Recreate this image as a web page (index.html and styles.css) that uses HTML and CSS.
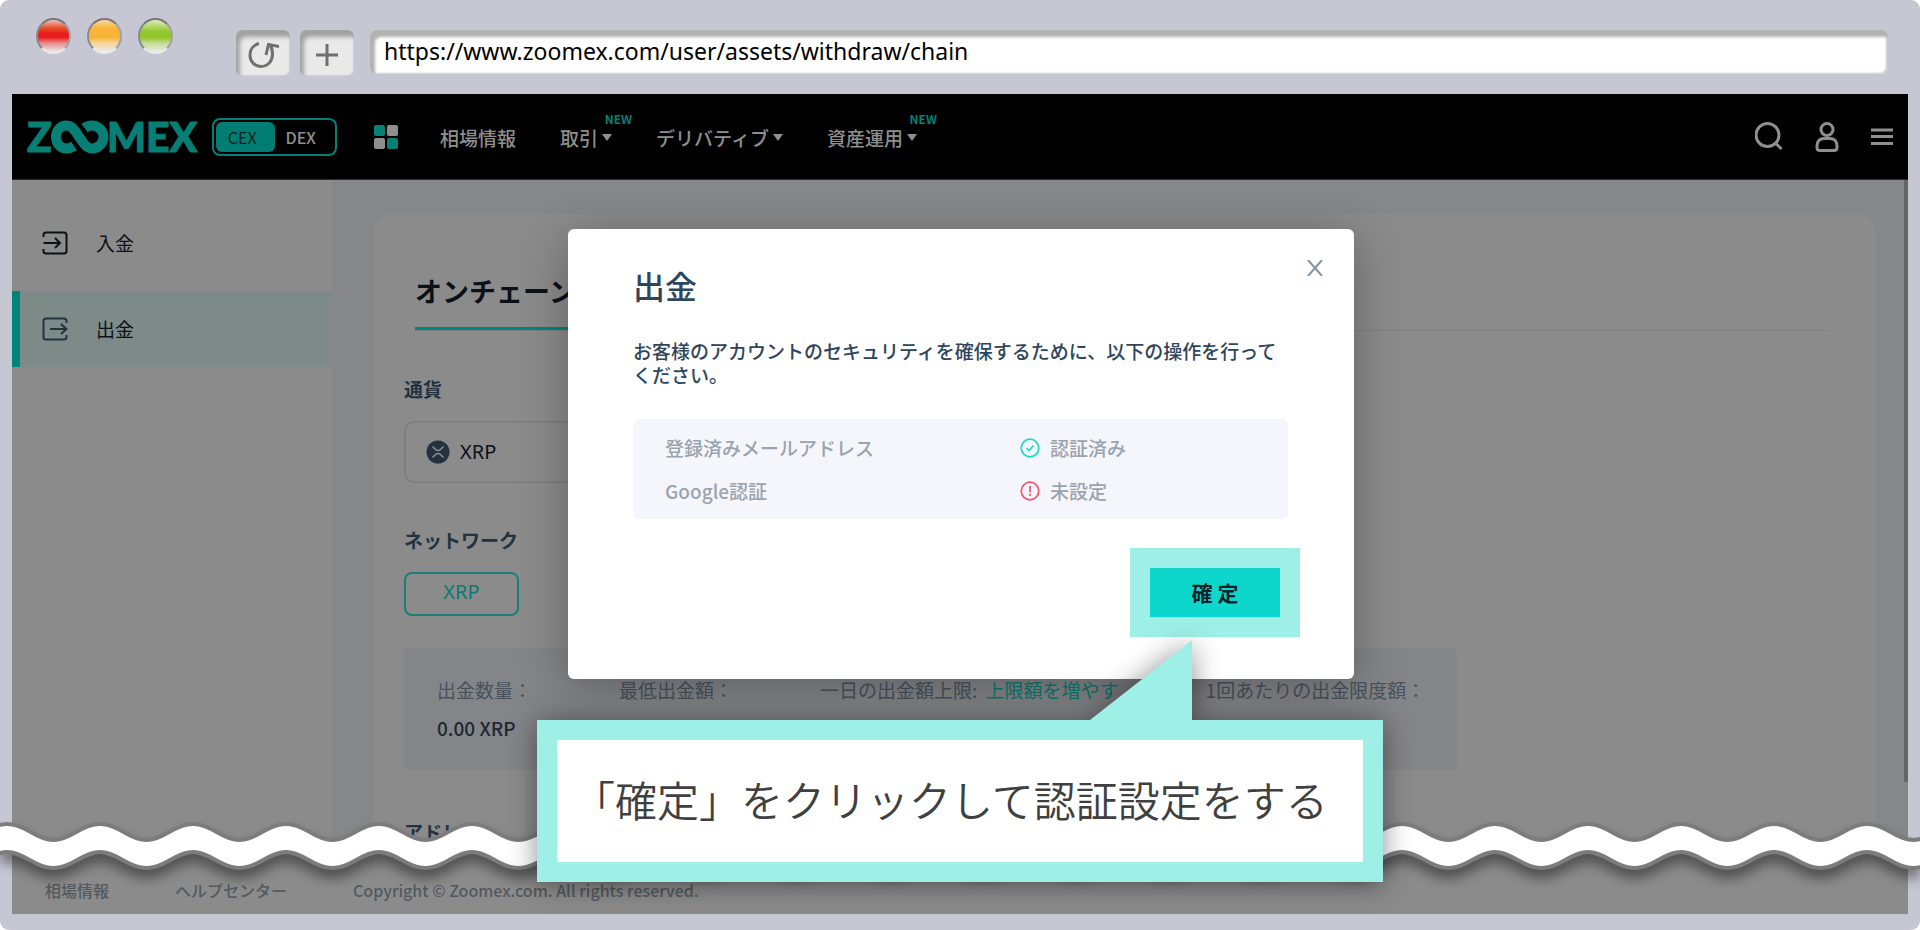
FILE: index.html
```html
<!DOCTYPE html>
<html lang="ja">
<head>
<meta charset="utf-8">
<title>ZOOMEX 出金</title>
<link rel="stylesheet" href="styles.css">
</head>
<body>
<div class="window">
  <div class="chrome">
    <div class="lights">
      <span class="light light-red"></span>
      <span class="light light-amber"></span>
      <span class="light light-green"></span>
    </div>
    <div class="chrome-buttons">
      <button class="chrome-button" type="button" aria-label="再読み込み">
        <svg width="32" height="32" viewBox="0 0 32 32" fill="none" stroke="#707070" stroke-width="3"><path d="M12 4.500C6 6 3 11 3 16C3 23 8 27.500 14 27.500C21 27.500 25.500 22 25.500 15C25.500 11 24.500 8 23 6"/><path d="M19 16L21.500 5.500L32 7.500"/></svg>
      </button>
      <button class="chrome-button" type="button" aria-label="新しいタブ">
        <svg width="22" height="22" viewBox="0 0 22 22" fill="none" stroke="#707070" stroke-width="3"><path d="M11 0V22M0 11H22"/></svg>
      </button>
    </div>
    <input class="url" type="text" aria-label="URL" value="https://www.zoomex.com/user/assets/withdraw/chain">
  </div>

  <div class="page">
    <header class="header">
      <a class="logo" href="#" aria-label="ZOOMEX">
        <svg width="172" height="50" viewBox="-2 -8 172 50">
          <text class="logo-text" x="-1" y="32">Z</text>
          <path d="M46 26C43 28 41 28.500 38.500 28.500C32 28.500 28 23 28 17C28 11 32 5.500 38.500 5.500C43 5.500 45 8 47.500 11.500L55 22.500C57.500 26 60 28.500 64 28.500C70.500 28.500 75.500 23 75.500 17C75.500 11 70.500 5.500 64 5.500C61 5.500 59 6 56.500 8" fill="none" stroke="#067f75" stroke-width="10"/>
          <text class="logo-text" x="79" y="32">MEX</text>
        </svg>
      </a>
      <div class="switch">
        <button class="switch-item switch-on" type="button">CEX</button>
        <button class="switch-item" type="button">DEX</button>
      </div>
      <svg class="apps" width="24" height="24" viewBox="0 0 24 24"><rect width="11" height="11" rx="2" fill="#067f75"/><rect x="13" width="11" height="11" rx="2" fill="#8f8f8f"/><rect y="13" width="11" height="11" rx="2" fill="#8f8f8f"/><rect x="13" y="13" width="11" height="11" rx="2" fill="#067f75"/></svg>
      <nav class="nav">
        <a href="#">相場情報</a>
        <a href="#">取引<i class="caret"></i><sup class="new">NEW</sup></a>
        <a href="#">デリバティブ<i class="caret"></i></a>
        <a href="#">資産運用<i class="caret"></i><sup class="new">NEW</sup></a>
      </nav>
      <div class="tools">
        <button type="button" aria-label="検索"><svg width="28" height="30" viewBox="0 0 28 30"><circle cx="12.500" cy="13" r="11.500"/><path d="M20 20.500L26.500 27"/></svg></button>
        <button type="button" aria-label="アカウント"><svg width="24" height="30" viewBox="0 0 24 30"><circle cx="12" cy="7.500" r="6"/><path d="M2 24C2 19 5 16.500 9 16.500H15C19 16.500 22 19 22 24V25.500Q22 28.500 19 28.500H5Q2 28.500 2 25.500Z"/></svg></button>
        <button type="button" aria-label="メニュー"><svg width="22" height="30" viewBox="0 0 22 30"><path d="M0 8H22M0 14.500H22M0 21.500H22"/></svg></button>
      </div>
    </header>

    <div class="main">
      <aside class="side">
        <a class="side-item" href="#">
          <svg width="26" height="24" viewBox="0 0 26 24"><path d="M1.500 6V4Q1.500 1.500 4 1.500H22Q24.500 1.500 24.500 4V20Q24.500 22.500 22 22.500H4Q1.500 22.500 1.500 20V18M1.500 12H18M13 7L18 12L13 17"/></svg>
          入金
        </a>
        <a class="side-item side-active" href="#">
          <svg width="26" height="24" viewBox="0 0 26 24"><path d="M24.500 6V4Q24.500 1.500 22 1.500H4Q1.500 1.500 1.500 4V20Q1.500 22.500 4 22.500H22Q24.500 22.500 24.500 20V18M8 12H24.500M19 7L24.500 12L19 17"/></svg>
          出金
        </a>
      </aside>
      <section class="content">
        <div class="card">
          <div class="tabs"><h1 class="tab">オンチェーン出金</h1></div>
          <h2 class="label">通貨</h2>
          <button class="select" type="button">
            <svg width="24" height="24" viewBox="0 0 24 24"><circle cx="12" cy="12" r="11.500" fill="#233241"/><path d="M6.500 6.500L9.500 9.500Q12 11.500 14.500 9.500L17.500 6.500M6.500 17.500L9.500 14.500Q12 12.500 14.500 14.500L17.500 17.500" fill="none" stroke="#8b8b8b" stroke-width="1.600"/></svg>
            XRP
          </button>
          <h2 class="label">ネットワーク</h2>
          <button class="network" type="button">XRP</button>
          <dl class="limits">
            <div class="limit"><dt>出金数量：</dt><dd>0.00 XRP</dd></div>
            <div class="limit"><dt>最低出金額：</dt></div>
            <div class="limit"><dt>一日の出金額上限: <a href="#">上限額を増やす</a></dt></div>
            <div class="limit"><dt>1回あたりの出金限度額：</dt></div>
          </dl>
          <h2 class="label">アドレス</h2>
        </div>
      </section>
      <span class="scrollbar"></span>
    </div>

    <footer class="footer">
      <a href="#">相場情報</a>
      <a href="#">ヘルプセンター</a>
      <span>Copyright © Zoomex.com. All rights reserved.</span>
    </footer>
  </div>

  <svg class="wave" width="100%" height="56" aria-hidden="true">
    <defs>
      <pattern id="ripple" x="7" y="0" width="93" height="56" patternUnits="userSpaceOnUse">
        <path d="M-93 8C-76 8 -63.500 24 -46.500 24S-17 8 0 8S29.500 24 46.500 24S76 8 93 8S122.500 24 139.500 24V48C122.500 48 110 32 93 32S63.500 48 46.500 48S17 32 0 32S-29.500 48 -46.500 48S-76 32 -93 32Z" fill="#fff" stroke="#7c7c7c" stroke-width="8"/>
        <path d="M-93 8C-76 8 -63.500 24 -46.500 24S-17 8 0 8S29.500 24 46.500 24S76 8 93 8S122.500 24 139.500 24V48C122.500 48 110 32 93 32S63.500 48 46.500 48S17 32 0 32S-29.500 48 -46.500 48S-76 32 -93 32Z" fill="#fff"/>
      </pattern>
    </defs>
    <rect width="100%" height="56" fill="url(#ripple)"/>
  </svg>

  <div class="overlay">
    <div class="modal" role="dialog" aria-labelledby="modal-title">
      <button class="close" type="button" aria-label="閉じる"><svg width="16" height="16" viewBox="0 0 16 16" fill="none" stroke="#8592a0" stroke-width="2"><path d="M1 0L15 16M15 0L1 16"/></svg></button>
      <h2 class="modal-title" id="modal-title">出金</h2>
      <p class="modal-text">お客様のアカウントのセキュリティを確保するために、以下の操作を行ってください。</p>
      <div class="checks">
        <div class="check">
          <span>登録済みメールアドレス</span>
          <span class="status"><svg width="20" height="20" viewBox="0 0 20 20" fill="none" stroke="#16dcc9" stroke-width="1.700"><circle cx="10" cy="10" r="8.800"/><path d="M6.500 10L9 12.500L13.500 7.500"/></svg>認証済み</span>
        </div>
        <div class="check">
          <span>Google認証</span>
          <span class="status"><svg width="20" height="20" viewBox="0 0 20 20" fill="none" stroke="#f0566e" stroke-width="1.700"><circle cx="10" cy="10" r="8.800"/><path d="M10 5V11.500M10 13V15"/></svg>未設定</span>
        </div>
      </div>
      <div class="actions"><button class="confirm" type="button">確 定</button></div>
    </div>
  </div>

  <div class="callout-layer">
    <div class="callout">
      <svg class="pointer" width="102" height="80" viewBox="0 0 102 80"><path d="M102 0V80H0Z" fill="#9ef0e6"/></svg>
      <p class="callout-text">「確定」をクリックして認証設定をする</p>
    </div>
  </div>
</div>
</body>
</html>
```
FILE: styles.css
```css
* { box-sizing: border-box; }
body {
  margin: 0;
  background: #fff;
  color: #0b1118;
  font-family: "Noto Sans CJK JP", "Noto Sans", sans-serif;
  font-size: 19px;
  line-height: 24px;
}
h1, h2, p, dl, dd { margin: 0; }
a { color: inherit; text-decoration: none; }
button { font: inherit; color: inherit; background: none; border: 0; padding: 0; }
svg { display: block; flex: none; }

.window {
  position: relative;
  display: flex;
  flex-direction: column;
  min-height: 100vh;
  padding: 0 12px 16px;
  background: #c7c6d3;
  border-radius: 9px;
  overflow: hidden;
}

/* browser chrome */
.chrome { display: flex; align-items: flex-start; height: 94px; padding: 18px 20px 0 24px; }
.lights { display: flex; gap: 16px; }
.light {
  width: 35px;
  height: 36px;
  border-radius: 50%;
  border: 2px solid;
  border-color: #77777c #a0a0a8 #e8e8ee #8a8a90;
}
.light-red { background: linear-gradient(#eec0b8, #e6502c 25%, #e81c1c 42%, #e81c1c 54%, #e88c8c 72%, #ececec); }
.light-amber { background: linear-gradient(#f6d8a4, #f8b638 26%, #f8b434 54%, #f6d498 72%, #ececec); }
.light-green { background: linear-gradient(#dcecb8, #94c830 36%, #90c424 54%, #c4dc94 72%, #ececec); }
.chrome-buttons { display: flex; gap: 10px; margin: 12px 16px 0 63px; }
.chrome-button {
  display: flex;
  align-items: center;
  justify-content: center;
  width: 54px;
  height: 46px;
  padding-top: 4px;
  border-radius: 6px;
  background: #e9e9e9;
  box-shadow: inset 4px 7px 4px #a2a2a2, inset -1px -1px 1px #d0d0d0;
}
.url {
  flex: 1;
  min-width: 0;
  height: 44px;
  margin-top: 12px;
  padding: 0 14px 2px;
  border: 0;
  border-radius: 6px;
  background: #fff;
  box-shadow: inset 5px 7px 3px #b2b2b2, inset -2px -1px 2px #c8c8c8;
  color: #000;
  font-family: "Noto Sans", sans-serif;
  font-size: 23px;
}

/* site */
.page { flex: 1; display: flex; flex-direction: column; min-height: 0; background: #8b8b8b; }
.header {
  display: flex;
  align-items: center;
  height: 86px;
  padding: 0 15px 0 14px;
  background: #000;
  border-bottom: 1px solid #2c2c2c;
  color: #8f8f8f;
}
.logo-text { font: 900 41px Lato, sans-serif; fill: #067f75; stroke: #067f75; stroke-width: 1px; }
.switch {
  display: flex;
  width: 125px;
  height: 38px;
  margin: 0 37px 0 14px;
  padding: 2px;
  border: 2px solid #067f75;
  border-radius: 8px;
}
.switch-item { flex: 1; padding-right: 6px; border-radius: 6px; font-size: 16px; font-weight: 500; }
.switch-on { background: #007d73; color: #06201e; font-weight: 400; }
.nav { display: flex; gap: 45px; padding: 2px 0 0 42px; }
.nav a { position: relative; display: flex; align-items: center; gap: 4px; font-weight: 500; }
.caret { border: 5px solid transparent; border-top: 7px solid #8f8f8f; border-bottom: 0; }
.nav a + a { margin-left: -1px; }
.new {
  position: absolute;
  right: -20px;
  top: -15px;
  color: #067f75;
  font-size: 12px;
  line-height: 16px;
  font-weight: 700;
}
.tools { display: flex; gap: 32px; margin-left: auto; }
.tools svg { fill: none; stroke: #8f8f8f; stroke-width: 3; }

.main { position: relative; flex: 1 1 0; display: flex; min-height: 0; overflow: hidden; background: #868789; }
.side { display: flex; flex-direction: column; gap: 10px; width: 320px; padding-top: 25px; background: #8b8b8b; }
.side-item {
  display: flex;
  align-items: center;
  gap: 28px;
  height: 76px;
  padding-left: 22px;
  border-left: 8px solid transparent;
}
.side-item svg { fill: none; stroke: #0b1118; stroke-width: 2; }
.side-active { background: #7d8a88; border-color: #00857a; }
.side-active svg { stroke: #233241; }
.content { flex: 1; padding: 34px 32px 0 41px; }
.card { height: 1000px; padding: 55px 31px 0; border-radius: 18px; background: #8b8b8b; }
.tabs { display: flex; margin: 0 15px 1px 11px; border-bottom: 1px solid #828282; }
.tab { padding-bottom: 14px; border-bottom: 3px solid #00857a; font-size: 27px; line-height: 44px; font-weight: 700; }
.label { padding-top: 45px; margin: 0 0 20px; color: #233241; font-size: 19px; line-height: 24px; font-weight: 700; }
.select {
  display: flex;
  align-items: center;
  gap: 10px;
  width: 600px;
  height: 62px;
  padding-left: 20px;
  border: 2px solid #7f7f7f;
  border-radius: 10px;
  font-family: "Noto Sans", sans-serif;
  font-size: 20px;
}
.network {
  width: 115px;
  height: 44px;
  padding-bottom: 5px;
  border: 2px solid #1a7f76;
  border-radius: 8px;
  color: #0b7a70;
  font-family: "Noto Sans", sans-serif;
  font-size: 20px;
}
.limits {
  display: flex;
  width: 1053px;
  height: 122px;
  margin: 32px 0 5px;
  padding: 30px 33px;
  border-radius: 5px;
  background: #848588;
}
.limit { flex: none; margin-right: 87px; color: #48525c; }
.limit a { margin-left: 4px; color: #0b7a70; }
.limit dd { margin-top: 14px; color: #1c2833; font-weight: 500; }
.scrollbar { position: absolute; top: 0; right: 0; width: 4px; height: 602px; background: #666; }

.footer { display: flex; gap: 66px; height: 60px; padding: 24px 33px 0; color: #53595f; font-size: 16px; font-weight: 500; }

.wave { position: absolute; left: 0; bottom: 56px; filter: drop-shadow(0 9px 6px rgba(0, 0, 0, 0.4)); }

/* dialog */
.overlay { position: absolute; top: 229px; left: 2px; right: 0; display: flex; justify-content: center; }
.modal {
  position: relative;
  width: 786px;
  padding: 38px 54px 42px 65px;
  border-radius: 6px;
  background: #fff;
  box-shadow: 0 8px 48px rgba(0, 0, 0, 0.3);
  color: #2e465c;
}
.close { position: absolute; top: 31px; right: 31px; }
.modal-title { font-size: 32px; line-height: 36px; font-weight: 500; }
.modal-text { margin: 36px 0 32px; padding-right: 12px; font-weight: 500; }
.checks {
  display: flex;
  flex-direction: column;
  gap: 19px;
  margin-right: 12px;
  padding: 17px 32px 16px;
  border-radius: 6px;
  background: #f5f6fb;
  color: #9aa3ae;
  font-weight: 500;
}
.check { display: grid; grid-template-columns: 355px 1fr; }
.status { display: flex; align-items: center; gap: 10px; }
.actions { display: flex; width: 170px; margin: 29px 0 0 auto; padding: 20px; background: #9ef0e6; }
.confirm { flex: 1; height: 49px; padding-bottom: 2px; background: #0dd6ca; color: #10202c; font-size: 21px; font-weight: 700; }

/* annotation */
.callout-layer { position: absolute; top: 720px; left: 0; right: 0; display: flex; justify-content: center; }
.callout {
  position: relative;
  width: 846px;
  padding: 28px 16px 32px;
  border: 20px solid #9ef0e6;
  background: #fff;
  filter: drop-shadow(0 2px 14px rgba(0, 0, 0, 0.45));
}
.pointer { position: absolute; top: -100px; right: 171px; }
.callout-text { color: #404040; font-size: 42px; line-height: 62px; font-weight: 350; white-space: nowrap; }
```
